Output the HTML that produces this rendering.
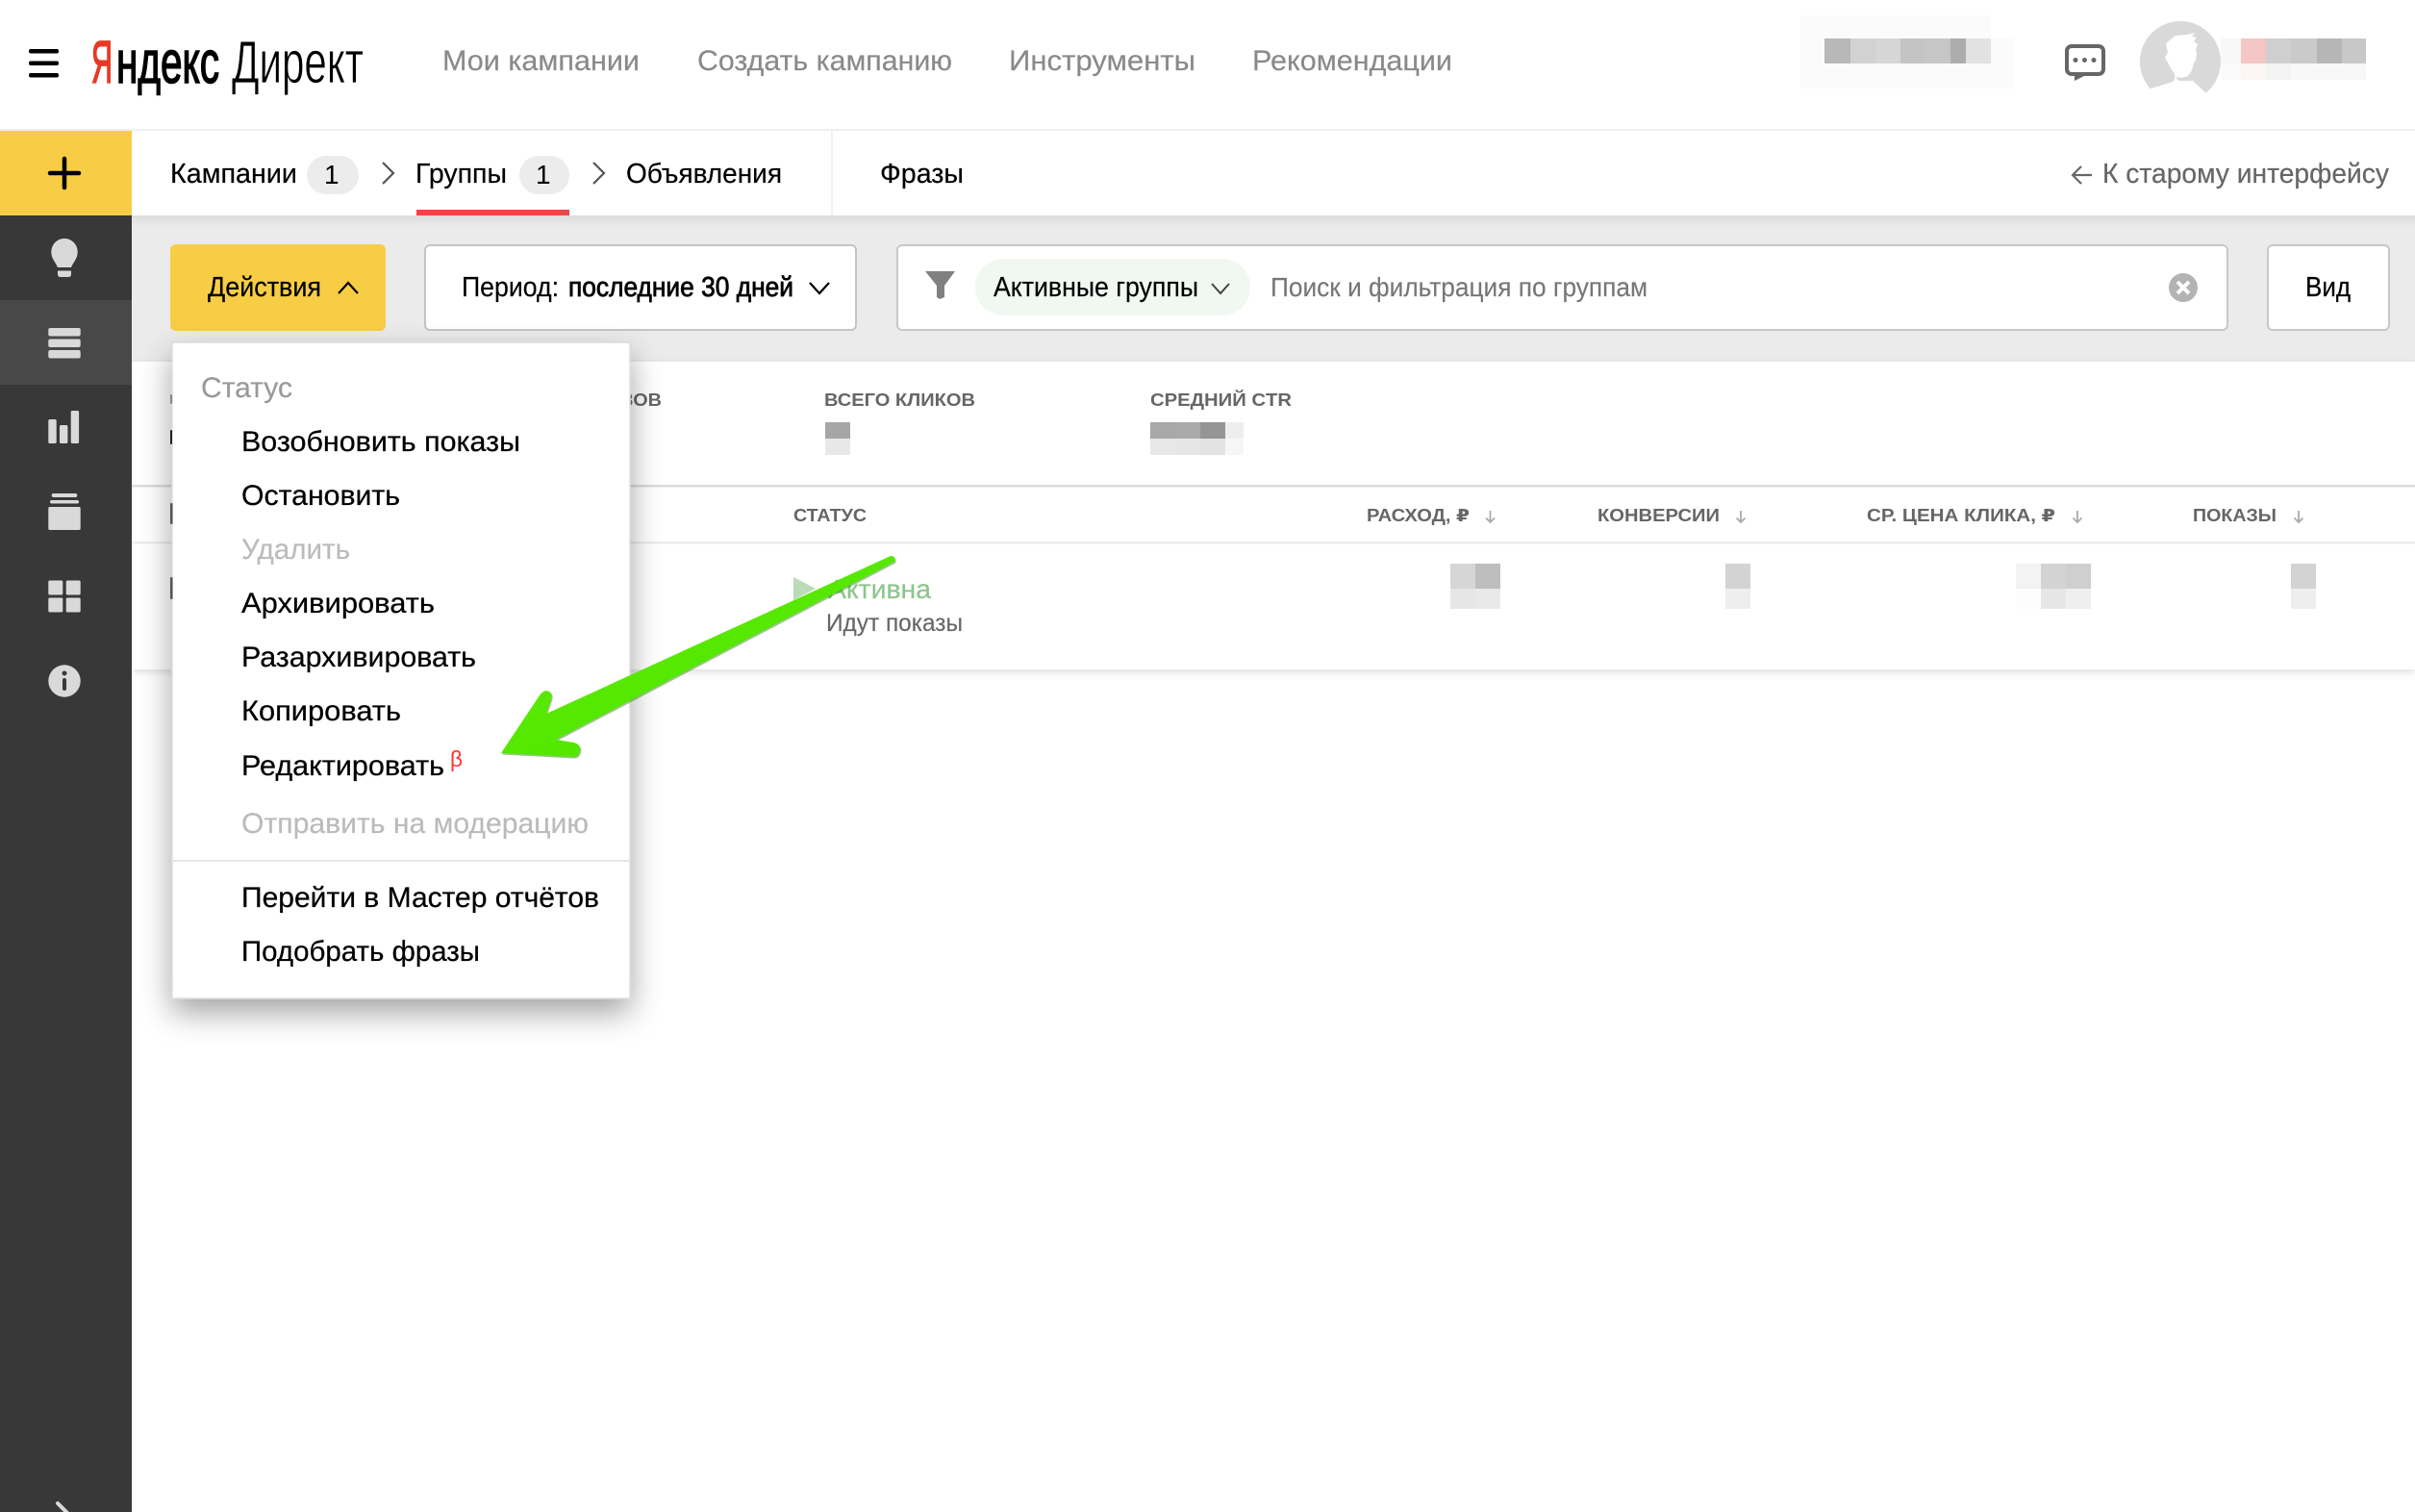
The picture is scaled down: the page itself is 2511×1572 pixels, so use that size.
<!DOCTYPE html>
<html lang="ru"><head><meta charset="utf-8"><title>Яндекс Директ</title>
<style>
html,body{margin:0;padding:0;background:#fff}
body{width:2511px;height:1572px;overflow:hidden}
svg{display:block;font-family:"Liberation Sans","DejaVu Sans",sans-serif}
.m{font-size:30px;fill:#000;stroke:#000;stroke-width:.25px}
.g{font-size:30px;fill:#bbb;stroke:#bbb;stroke-width:.2px}
.n{font-size:30px;fill:#8a8a8a;stroke:#8a8a8a;stroke-width:.2px}
.b{font-size:29px;fill:#000;stroke:#000;stroke-width:.2px}
.h{font-size:18px;font-weight:700;fill:#666}
</style></head><body>
<svg width="2511" height="1572" viewBox="0 0 2511 1572" xmlns="http://www.w3.org/2000/svg">
<defs>
<filter id="ms" x="-20%" y="-10%" width="140%" height="125%"><feDropShadow dx="0" dy="14" stdDeviation="16" flood-color="#000" flood-opacity=".36"/></filter>
<filter id="cs" x="-2%" y="-5%" width="104%" height="115%"><feDropShadow dx="0" dy="3" stdDeviation="4" flood-color="#000" flood-opacity=".12"/></filter>
<linearGradient id="ag" x1="0" y1="0" x2="1" y2="1"><stop offset="0" stop-color="#66f000"/><stop offset=".6" stop-color="#52e600"/><stop offset="1" stop-color="#3fd400"/></linearGradient>
<linearGradient id="bs" x1="0" y1="0" x2="0" y2="1"><stop offset="0" stop-color="#dcdcdc"/><stop offset="1" stop-color="#ebebeb"/></linearGradient>
</defs>
<rect width="2511" height="1572" fill="#fff"/>

<!-- Header -->
<rect y="134" width="2511" height="2" fill="#f0f0f0"/>
<g fill="#000"><rect x="30" y="51" width="31" height="4.500" rx="2"/><rect x="30" y="63.500" width="31" height="4.500" rx="2"/><rect x="30" y="76" width="31" height="4.500" rx="2"/></g>
<text x="95" y="86" font-size="62" fill="#e63a24" stroke="#e63a24" stroke-width="1.800" textLength="22" lengthAdjust="spacingAndGlyphs">Я</text>
<text x="121" y="86" font-size="62" fill="#000" stroke="#000" stroke-width="1.600" textLength="107" lengthAdjust="spacingAndGlyphs">ндекс</text>
<text x="241" y="86" font-size="62" fill="#000" stroke="#fff" stroke-width=".7" textLength="137" lengthAdjust="spacingAndGlyphs">Директ</text>
<text class="n" x="460" y="73" textLength="205" lengthAdjust="spacingAndGlyphs">Мои кампании</text>
<text class="n" x="725" y="73" textLength="265" lengthAdjust="spacingAndGlyphs">Создать кампанию</text>
<text class="n" x="1049" y="73" textLength="194" lengthAdjust="spacingAndGlyphs">Инструменты</text>
<text class="n" x="1302" y="73" textLength="208" lengthAdjust="spacingAndGlyphs">Рекомендации</text>

<!-- blurred header blocks -->
<rect x="1872" y="40" width="222" height="52" fill="#fbfbfb"/><rect x="1872" y="16" width="198" height="24" fill="#fbfbfb"/>
<rect x="1897" y="40" width="27" height="26" fill="#b8b8b8"/><rect x="1924" y="40" width="26" height="26" fill="#d2d2d2"/><rect x="1950" y="40" width="26" height="26" fill="#d6d6d6"/><rect x="1976" y="40" width="26" height="26" fill="#c4c4c4"/><rect x="2002" y="40" width="26" height="26" fill="#c6c6c6"/><rect x="2028" y="40" width="16" height="26" fill="#adadad"/><rect x="2044" y="40" width="26" height="26" fill="#e2e2e2"/>

<!-- chat -->
<rect x="2149" y="48" width="38" height="29" rx="5" fill="none" stroke="#666" stroke-width="4"/>
<path d="M2157 78 L2157 84 L2169 78 Z" fill="#666"/>
<circle cx="2158" cy="62.500" r="2.500" fill="#666"/><circle cx="2167.500" cy="62.500" r="2.500" fill="#666"/><circle cx="2177" cy="62.500" r="2.500" fill="#666"/>

<!-- avatar -->
<circle cx="2267" cy="64" r="42" fill="#d9d9d9"/>
<path d="M2233 106 L2233 93 Q2250 88 2259 85 Q2262 83 2261 77 L2257 71 Q2253 63 2251 60 L2254 55 L2252 45 L2257 41 L2262 37 L2274 36 L2282 34 L2279 38 L2284 39 L2281 43 L2285 46 L2283 52 L2284 56 L2283 62 L2281 66 L2279 73 L2275 79 L2268 81 L2263 80 Q2263 85 2270 84 L2280 84 L2294 97 L2300 106 Z" fill="#fff"/>
<rect x="2309" y="40" width="21" height="26" fill="#f8f8f8"/><rect x="2330" y="40" width="26" height="26" fill="#f4c6c4"/><rect x="2356" y="40" width="26" height="26" fill="#cfcfcf"/><rect x="2382" y="40" width="27" height="26" fill="#cacaca"/><rect x="2409" y="40" width="26" height="26" fill="#b6b6b6"/><rect x="2435" y="40" width="25" height="26" fill="#c8c8c8"/>
<rect x="2309" y="66" width="21" height="17" fill="#fbfbfb"/><rect x="2330" y="66" width="26" height="17" fill="#fdf6f5"/><rect x="2356" y="66" width="26" height="17" fill="#f4f4f4"/><rect x="2382" y="66" width="78" height="17" fill="#f8f8f8"/>

<!-- Gray band -->
<rect x="137" y="224" width="2374" height="152" fill="#ebebeb"/>
<rect x="137" y="224" width="2374" height="12" fill="url(#bs)"/>

<!-- Breadcrumbs -->
<rect x="864" y="136" width="2" height="88" fill="#f0f0f0"/>
<text class="b" x="177" y="190" textLength="132" lengthAdjust="spacingAndGlyphs">Кампании</text>
<rect x="319" y="162" width="54" height="40" rx="20" fill="#ececec"/>
<text x="337" y="191" font-size="28" fill="#000">1</text>
<path d="M398 169 L409 180 L398 191" fill="none" stroke="#555" stroke-width="2.200"/>
<text class="b" x="432" y="190" textLength="95" lengthAdjust="spacingAndGlyphs">Группы</text>
<rect x="540" y="162" width="52" height="40" rx="20" fill="#ececec"/>
<text x="557" y="191" font-size="28" fill="#000">1</text>
<rect x="433" y="218" width="159" height="6" fill="#ed4545"/>
<path d="M617 169 L628 180 L617 191" fill="none" stroke="#555" stroke-width="2.200"/>
<text class="b" x="651" y="190" textLength="162" lengthAdjust="spacingAndGlyphs">Объявления</text>
<text class="b" x="915" y="190" textLength="87" lengthAdjust="spacingAndGlyphs">Фразы</text>
<path d="M2175 182 L2155 182 M2164 173 L2155 182 L2164 191" fill="none" stroke="#666" stroke-width="2.200"/>
<text x="2186" y="190" font-size="29" fill="#666" stroke="#666" stroke-width=".2" textLength="298" lengthAdjust="spacingAndGlyphs">К старому интерфейсу</text>

<!-- Toolbar -->
<rect x="177" y="254" width="224" height="90" rx="6" fill="#f7cd46"/>
<text class="b" x="216" y="308" textLength="118" lengthAdjust="spacingAndGlyphs">Действия</text>
<path d="M352 305 L362 294 L372 305" fill="none" stroke="#000" stroke-width="2.200"/>
<rect x="442" y="255" width="448" height="88" rx="5" fill="#fff" stroke="#c4c4c4" stroke-width="2"/>
<text class="b" x="480" y="308" textLength="101" lengthAdjust="spacingAndGlyphs">Период:</text>
<text class="b" x="591" y="308" style="stroke-width:.8px" textLength="234" lengthAdjust="spacingAndGlyphs">последние 30 дней</text>
<path d="M842 294 L852 305 L862 294" fill="none" stroke="#000" stroke-width="2.200"/>
<rect x="933" y="255" width="1383" height="88" rx="5" fill="#fff" stroke="#c8c8c8" stroke-width="2"/>
<path d="M962 282 L993 282 L982 297 L982 309 L977 311 L974 309 L974 297 Z" fill="#808080"/>
<rect x="1014" y="269" width="286" height="59" rx="29" fill="#f1f8f2"/>
<text class="b" x="1033" y="308" textLength="213" lengthAdjust="spacingAndGlyphs">Активные группы</text>
<path d="M1260 295 L1269 305 L1278 295" fill="none" stroke="#444" stroke-width="2"/>
<text x="1321" y="308" font-size="28" fill="#777" stroke="#777" stroke-width=".15" textLength="392" lengthAdjust="spacingAndGlyphs">Поиск и фильтрация по группам</text>
<circle cx="2270" cy="299" r="15" fill="#b3b3b3"/>
<path d="M2264 293 L2276 305 M2276 293 L2264 305" stroke="#fff" stroke-width="4"/>
<rect x="2358" y="255" width="126" height="88" rx="5" fill="#fff" stroke="#c8c8c8" stroke-width="2"/>
<text class="b" x="2397" y="308" textLength="47" lengthAdjust="spacingAndGlyphs">Вид</text>

<!-- Table card -->
<rect x="137" y="376" width="2374" height="320" fill="#fff" filter="url(#cs)"/>
<rect x="137" y="504" width="2374" height="2.500" fill="#dcdcdc"/>
<rect x="137" y="563" width="2374" height="2.500" fill="#ececec"/>
<text class="h" x="517" y="422" textLength="171" lengthAdjust="spacingAndGlyphs">ВСЕГО ПОКАЗОВ</text>
<text class="h" x="857" y="422" textLength="157" lengthAdjust="spacingAndGlyphs">ВСЕГО КЛИКОВ</text>
<text class="h" x="1196" y="422" textLength="147" lengthAdjust="spacingAndGlyphs">СРЕДНИЙ CTR</text>
<rect x="858" y="439" width="26" height="17" fill="#a6a6a6"/><rect x="858" y="456" width="26" height="17" fill="#e8e8e8"/>
<rect x="1196" y="439" width="26" height="17" fill="#a8a8a8"/><rect x="1222" y="439" width="26" height="17" fill="#aaa"/><rect x="1248" y="439" width="26" height="17" fill="#959595"/><rect x="1274" y="439" width="19" height="17" fill="#eee"/>
<rect x="1196" y="456" width="26" height="17" fill="#e8e8e8"/><rect x="1222" y="456" width="26" height="17" fill="#e6e6e6"/><rect x="1248" y="456" width="26" height="17" fill="#e3e3e3"/><rect x="1274" y="456" width="19" height="17" fill="#f6f6f6"/>
<text class="h" x="825" y="542" textLength="76" lengthAdjust="spacingAndGlyphs">СТАТУС</text>
<text class="h" x="1421" y="542" textLength="107" lengthAdjust="spacingAndGlyphs">РАСХОД, ₽</text>
<text class="h" x="1661" y="542" textLength="127" lengthAdjust="spacingAndGlyphs">КОНВЕРСИИ</text>
<text class="h" x="1941" y="542" textLength="196" lengthAdjust="spacingAndGlyphs">СР. ЦЕНА КЛИКА, ₽</text>
<text class="h" x="2280" y="542" textLength="87" lengthAdjust="spacingAndGlyphs">ПОКАЗЫ</text>
<g fill="none" stroke="#aaa" stroke-width="1.800">
<path d="M1549.500 531 V543 M1545 538.500 L1549.500 543 L1554 538.500"/>
<path d="M1810 531 V543 M1805.500 538.500 L1810 543 L1814.500 538.500"/>
<path d="M2160 531 V543 M2155.500 538.500 L2160 543 L2164.500 538.500"/>
<path d="M2390 531 V543 M2385.500 538.500 L2390 543 L2394.500 538.500"/>
</g>
<path d="M825 600 L848 612 L825 624 Z" fill="#b9dbb9"/>
<text x="861" y="622" font-size="28" fill="#8cc58c" stroke="#8cc58c" stroke-width=".2" textLength="107" lengthAdjust="spacingAndGlyphs">Активна</text>
<text x="859" y="656" font-size="25" fill="#666" stroke="#666" stroke-width=".15" textLength="142" lengthAdjust="spacingAndGlyphs">Идут показы</text>
<rect x="1508" y="586" width="26" height="26" fill="#d6d6d6"/><rect x="1534" y="586" width="26" height="26" fill="#bebebe"/><rect x="1508" y="612" width="26" height="21" fill="#e6e6e6"/><rect x="1534" y="612" width="26" height="21" fill="#e9e9e9"/>
<rect x="1794" y="586" width="26" height="26" fill="#d3d3d3"/><rect x="1794" y="612" width="26" height="21" fill="#eee"/>
<rect x="2096" y="586" width="26" height="26" fill="#f3f3f3"/><rect x="2122" y="586" width="26" height="26" fill="#d3d3d3"/><rect x="2148" y="586" width="26" height="26" fill="#cfcfcf"/><rect x="2096" y="612" width="26" height="21" fill="#fdfdfd"/><rect x="2122" y="612" width="26" height="21" fill="#e6e6e6"/><rect x="2148" y="612" width="26" height="21" fill="#efefef"/>
<rect x="2382" y="586" width="26" height="26" fill="#d3d3d3"/><rect x="2382" y="612" width="26" height="21" fill="#eee"/>

<!-- Dropdown -->
<rect x="179" y="356" width="476" height="682" fill="#fff" stroke="#dcdcdc" stroke-width="1.500" filter="url(#ms)"/>
<g>
<rect x="177" y="410" width="2" height="10" rx="1" fill="#888"/><rect x="177" y="447" width="2" height="15" rx="1" fill="#222"/><rect x="177" y="523" width="2.500" height="22" rx="1" fill="#555"/><rect x="177" y="600" width="2.500" height="23" rx="1" fill="#555"/>
</g>
<text x="209" y="413" font-size="30" fill="#999" stroke="#999" stroke-width=".2" textLength="95" lengthAdjust="spacingAndGlyphs">Статус</text>
<text class="m" x="251" y="469" textLength="290" lengthAdjust="spacingAndGlyphs">Возобновить показы</text>
<text class="m" x="251" y="525" textLength="165" lengthAdjust="spacingAndGlyphs">Остановить</text>
<text class="g" x="251" y="581" textLength="113" lengthAdjust="spacingAndGlyphs">Удалить</text>
<text class="m" x="251" y="637" textLength="201" lengthAdjust="spacingAndGlyphs">Архивировать</text>
<text class="m" x="251" y="693" textLength="244" lengthAdjust="spacingAndGlyphs">Разархивировать</text>
<text class="m" x="251" y="749" textLength="166" lengthAdjust="spacingAndGlyphs">Копировать</text>
<text class="m" x="251" y="806" textLength="211" lengthAdjust="spacingAndGlyphs">Редактировать</text>
<text x="468" y="797" font-size="23" fill="#f33" textLength="13" lengthAdjust="spacingAndGlyphs">β</text>
<text class="g" x="251" y="866" textLength="361" lengthAdjust="spacingAndGlyphs">Отправить на модерацию</text>
<rect x="179" y="894" width="476" height="2" fill="#e6e6e6"/>
<text class="m" x="251" y="943" textLength="372" lengthAdjust="spacingAndGlyphs">Перейти в Мастер отчётов</text>
<text class="m" x="251" y="999" textLength="248" lengthAdjust="spacingAndGlyphs">Подобрать фразы</text>

<!-- Sidebar -->
<rect width="137" height="1436" y="136" fill="#383838"/>
<rect y="136" width="137" height="88" fill="#f7cd46"/>
<path d="M67 165 V195 M52 180 H82" stroke="#000" stroke-width="4.500" stroke-linecap="round"/>
<rect y="312" width="137" height="88" fill="#484848"/>
<g fill="#d9d9d9">
<path d="M67 248 C59 248 53.300 254.500 53.300 262 C53.300 269 57.500 272 60 278 H74 C76.500 272 80.700 269 80.700 262 C80.700 254.500 75 248 67 248 Z"/>
<path d="M60 281.500 H74 V285 Q74 288 71 288 H63 Q60 288 60 285 Z"/>
<rect x="50.300" y="341" width="33.400" height="8.500" rx="2"/><rect x="50.300" y="352.500" width="33.400" height="8.500" rx="2"/><rect x="50.300" y="364" width="33.400" height="8.500" rx="2"/>
<rect x="50.300" y="436" width="8.400" height="25" rx="1.500"/><rect x="62" y="442" width="8.400" height="19" rx="1.500"/><rect x="73.700" y="427" width="8.400" height="34" rx="1.500"/>
<rect x="53.700" y="513" width="26.600" height="4" rx="2"/><rect x="52" y="520" width="30" height="3.500" rx="1.700"/><rect x="50.300" y="527" width="33.400" height="24" rx="1.500"/>
<rect x="50.300" y="603.500" width="15" height="15" rx="1.500"/><rect x="68.700" y="603.500" width="15" height="15" rx="1.500"/><rect x="50.300" y="621.500" width="15" height="15" rx="1.500"/><rect x="68.700" y="621.500" width="15" height="15" rx="1.500"/>
<circle cx="67" cy="708" r="16.700"/>
</g>
<circle cx="67" cy="700" r="2.500" fill="#383838"/>
<rect x="65" y="705" width="4" height="13" rx="2" fill="#383838"/>
<path d="M60 1563 L72 1575" stroke="#d9d9d9" stroke-width="4" stroke-linecap="round"/>

<!-- Green arrow -->
<path d="M926 578 Q932 578 930 584 L578 769 L597 772 Q605 775 603 781 Q601 788 595 787 L521 783 L561 723 Q566 716 571 719 Q575 721 573 727 L568 742 Z" fill="#2d7a10" opacity=".45" transform="translate(1 1.500)"/>
<path d="M926 578 Q932 578 930 584 L578 769 L597 772 Q605 775 603 781 Q601 788 595 787 L521 783 L561 723 Q566 716 571 719 Q575 721 573 727 L568 742 Z" fill="url(#ag)"/>
</svg>
</body></html>
